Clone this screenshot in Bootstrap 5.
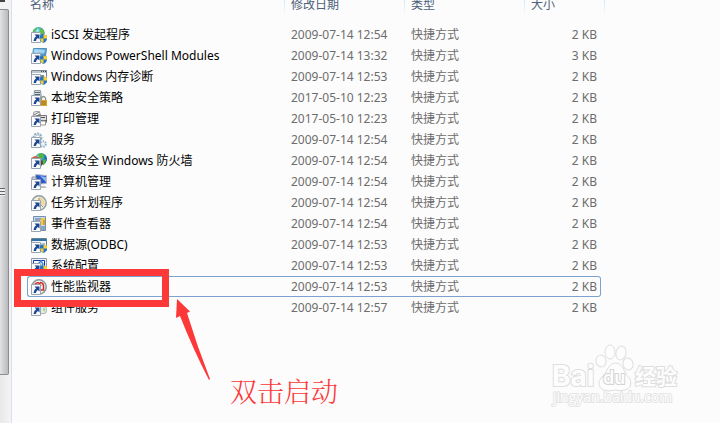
<!DOCTYPE html>
<html lang="zh-CN">
<head>
<meta charset="utf-8">
<meta name="viewport" content="width=device-width, initial-scale=1">
<title>管理工具</title>
<link href="https://cdn.jsdelivr.net/npm/bootstrap@5.3.0/dist/css/bootstrap.min.css" rel="stylesheet">
<style>
body{background:#fcfcfc;font:12px/20px "Noto Sans","Noto Sans CJK SC",sans-serif;color:#000}
.scroll-rail{width:12px;background:linear-gradient(90deg,#e9e9e9,#f1f1f1 8px,#f4f4f4);border-right:1px solid #d6e0f0}
.rail-cap{height:9px;width:9px;background:#f3f3f3}
.rail-cap::before{content:"";display:block;width:5px;height:2px;background:#444}
.rail-thumb{height:366px;width:9px;background:linear-gradient(90deg,#e2e2e4,#b9babd);border:1px solid #8c8c8c;border-left:0;border-radius:0 2px 2px 0}
.rail-grip{width:5px;height:8px;background:repeating-linear-gradient(#666 0 1px,#eee 1px 3px)}
.files{width:578px;margin-left:15px;table-layout:fixed;border-collapse:separate;border-spacing:0}
.files th{height:24px;padding:0 6px;font-weight:400;line-height:10px;color:#4c607a;vertical-align:top}
.files th:not(:nth-child(4)),.files .edge{background:linear-gradient(#d6e5f5,#fcfcfc) right top/1px 16px no-repeat}
.files th:first-child{padding-left:3px}
.files td{height:21px;padding:0 6px;color:#6d6d6d;line-height:19px;white-space:nowrap;border:solid transparent;border-width:1px 0}
.files tbody td:first-child{padding-left:3px;color:#000;border-left-width:1px}
.files tbody td:nth-child(4){padding-right:3px;border-right-width:1px;text-align:right}
.files tr.picked td{border-color:#7da2ce}
.files tr.picked td:first-child{border-radius:3px 0 0 3px}
.files tr.picked td:nth-child(4){border-radius:0 3px 3px 0}
.c-name{width:258px}.c-mid{width:120px}.c-size{width:76px}.c-end{width:4px}
.file-icon{width:16px;height:16px;flex:none}
.frame{left:14px;top:269px;width:155px;height:38px;border:solid #fd3838;border-width:7px}
.pointer{left:174px;top:296px}
.note{left:230px;top:374px;font:300 27px/34px "Noto Serif CJK SC","Noto Sans CJK SC",serif;color:#fd3838}
.brand{left:548px;top:340px}
</style>
<script src="https://cdn.jsdelivr.net/npm/bootstrap@5.3.0/dist/js/bootstrap.bundle.min.js"></script>
</head>
<body class="min-vh-100 d-flex position-relative overflow-hidden">
<svg class="position-absolute" width="0" height="0" aria-hidden="true">
<defs>
<linearGradient id="blue" x2="1" y2="1"><stop stop-color="#b8e4f8"/><stop offset="1" stop-color="#1769b5"/></linearGradient>
<radialGradient id="globe" cx=".4" cy=".3"><stop stop-color="#c8f4f4"/><stop offset=".5" stop-color="#46b8cc"/><stop offset="1" stop-color="#1a65a8"/></radialGradient>
</defs>
<symbol id="arrow" viewBox="0 0 16 16"><path d="M.5 5.500h9v10h-9z" fill="#fbfbfb" stroke="#9aa5b3"/><path d="M3.500 7.500h5v5L6.900 10.900Q5 12 5 14H2.500Q2.300 11 5.200 9.200z" fill="#1d4793"/></symbol>
<symbol id="shield" viewBox="0 0 16 16"><path d="M12.500 7.500l3.500 1v2.500q0 3.500-3.500 5-3.500-1.500-3.500-5V8.500z" fill="#2674c6"/><path d="M12.500 7.500l3.500 1v3h-3.500zM12.500 11.500V16q-2.800-1.300-3.400-4.500z" fill="#f9d12b"/></symbol>
<symbol id="i-iscsi" viewBox="0 0 16 16"><circle cx="7.500" cy="6" r="6" fill="url(#globe)"/><path d="M2.500 3q1-2 4-2.500L5 4 2 6zM9 1q4 1 4.500 5L11 8 9 5z" fill="#5ec24a"/><path d="M8 8h6v3H8z" fill="#a9b4bd"/><use href="#arrow"/><use href="#shield"/></symbol>
<symbol id="i-ps" viewBox="0 0 16 16"><path d="M2.500.500h13L14 12H1z" fill="url(#blue)" stroke="#4b91bd"/><path d="M4 2h10l-1 4Q8 3 4 6z" fill="#b8e4fa" opacity=".7"/><use href="#arrow"/><use href="#shield"/></symbol>
<symbol id="i-mem" viewBox="0 0 16 16"><path d="M.500 1.500h15v12H.500z" fill="#fff" stroke="#7e8994"/><path d="M1 2h14v2H1z" fill="#bcc6d0"/><path d="M10 2.500h1m1 0h1m1 0h1" stroke="#445"/><path d="M7 6h6v3H7z" fill="#888"/><use href="#arrow"/><use href="#shield"/></symbol>
<symbol id="i-sec" viewBox="0 0 16 16"><path d="M3.500.500h6l1 9h-8z" fill="#d6dce0" stroke="#8c979d"/><path d="M4 2.500h5M4 4.500h5" stroke="#52666d"/><path d="M10.500 10V8q2-3 4 0v2" fill="none" stroke="#8f8f80" stroke-width="1.300"/><path d="M9 10h7v6H9z" fill="#d6a52a"/><path d="M10 12h5m-5 2h5" stroke="#9f6e10"/><use href="#arrow"/></symbol>
<symbol id="i-print" viewBox="0 0 16 16"><path d="M2 5l1-4 5-1 2 5z" fill="#f3f3f3" stroke="#999"/><path d="M3 4l5-3m-2 4l3-2" stroke="#777"/><path d="M5.500 4.500h10v7h-10z" fill="#ddd" stroke="#777"/><path d="M7 6.500h7M10 9.500h6" stroke="#555"/><path d="M9.500 10h5v4h-5z" fill="#fff" stroke="#999"/><use href="#arrow"/></symbol>
<symbol id="i-gear" viewBox="0 0 16 16"><circle cx="6.500" cy="5.500" r="4" fill="#dce8ef" stroke="#95b2c4" stroke-width="2" stroke-dasharray="2 1"/><circle cx="6.500" cy="5.500" r="2.500" fill="#f9fbfc" stroke="#b2c7d4"/><circle cx="12" cy="12" r="2.800" fill="#edf4f8" stroke="#8fb3cb" stroke-width="2" stroke-dasharray="1.500 1"/><use href="#arrow"/></symbol>
<symbol id="i-fire" viewBox="0 0 16 16"><circle cx="10" cy="6" r="6" fill="url(#globe)"/><path d="M7 1q4-2 6 1l-2 4-3-1zM12 7l3-1-1 5-2 1z" fill="#53b538"/><path d="M0 5l4-2 6 2v6l-5 2-5-2z" fill="#c96143"/><path d="M9 6l3 3-2 5" fill="#733e33"/><use href="#arrow"/></symbol>
<symbol id="i-pc" viewBox="0 0 16 16"><path d="M4.500.500l11 1v8l-11 1z" fill="#2c58c8" stroke="#b6c0cf"/><path d="M9 2l6 1v5z" fill="#8eb5ed"/><path d="M1 3h4v9H1z" fill="#cbd0d7" stroke="#8e97a3"/><path d="M8 12h6l2 2H8z" fill="#bcc1c7"/><use href="#arrow"/></symbol>
<symbol id="i-task" viewBox="0 0 16 16"><circle cx="8" cy="8" r="7.200" fill="#f4f0df" stroke="#929ca6" stroke-width="1.500"/><path d="M8 8V2a6 6 0 0 1 5 9z" fill="#ecd79c"/><path d="M8 8l4 4M8 8V3" stroke="#8c918e"/><use href="#arrow"/></symbol>
<symbol id="i-event" viewBox="0 0 16 16"><path d="M2.500.500h12v14h-12z" fill="#c8daf0" stroke="#7590ad"/><path d="M4 3h6M4 5h5m1 6h4m-4 2h4" stroke="#516c91"/><path d="M10 2h4v7h-4z" fill="#f4c83f"/><path d="M13 4v5" stroke="#bd7b24"/><use href="#arrow"/></symbol>
<symbol id="i-odbc" viewBox="0 0 16 16"><path d="M.500 1.500h15v12H.500z" fill="#eef4f8" stroke="#638094"/><path d="M1 2h14v2H1z" fill="#3672a0"/><path d="M9 7h5M10 9h5" stroke="#8495a0"/><use href="#arrow"/><use href="#shield"/></symbol>
<symbol id="i-conf" viewBox="0 0 16 16"><path d="M.500.500h15v12H.500z" fill="#e8f2fa" stroke="#8f9bab"/><path d="M2.500 2.500h11v8h-11z" fill="#fff" stroke="#1734ae"/><path d="M7 6l3-3 2 3-2 3" fill="none" stroke="#3b8bd6" stroke-width="1.500"/><use href="#arrow"/><use href="#shield"/></symbol>
<symbol id="i-perf" viewBox="0 0 16 16"><circle cx="8" cy="8" r="7.200" fill="#f5f5f5" stroke="#89969a" stroke-width="1.500"/><path d="M4 5q2-2 4-1l2 3M9 3.500q3 0 3.500 3V11H10" fill="none" stroke="#cf2b27" stroke-width="1.500"/><use href="#arrow"/></symbol>
<symbol id="i-comp" viewBox="0 0 16 16"><circle cx="7" cy="4" r="4" fill="#d5dce1" stroke="#9aa4ac"/><circle cx="12" cy="10" r="3.800" fill="#e4ebe4" stroke="#aab4ac"/><path d="M12 8l2 1-1 3z" fill="#6ec36a"/><use href="#arrow"/></symbol>
</svg>

<aside class="scroll-rail flex-shrink-0" aria-hidden="true">
<div class="rail-cap"></div>
<div class="rail-thumb d-flex align-items-center"><div class="rail-grip"></div></div>
</aside>
<main class="flex-grow-1">
<table class="files">
<colgroup><col class="c-name"><col class="c-mid"><col class="c-mid"><col class="c-size"><col class="c-end"></colgroup>
<thead><tr><th scope="col">名称</th><th scope="col">修改日期</th><th scope="col">类型</th><th scope="col">大小</th><td class="p-0 border-0 edge"></td></tr></thead>
<tbody>
<tr><td><div class="d-flex align-items-center gap-1"><svg class="file-icon"><use href="#i-iscsi"/></svg>iSCSI 发起程序</div></td><td>2009-07-14 12:54</td><td>快捷方式</td><td>2 KB</td></tr>
<tr><td><div class="d-flex align-items-center gap-1"><svg class="file-icon"><use href="#i-ps"/></svg>Windows PowerShell Modules</div></td><td>2009-07-14 13:32</td><td>快捷方式</td><td>3 KB</td></tr>
<tr><td><div class="d-flex align-items-center gap-1"><svg class="file-icon"><use href="#i-mem"/></svg>Windows 内存诊断</div></td><td>2009-07-14 12:53</td><td>快捷方式</td><td>2 KB</td></tr>
<tr><td><div class="d-flex align-items-center gap-1"><svg class="file-icon"><use href="#i-sec"/></svg>本地安全策略</div></td><td>2017-05-10 12:23</td><td>快捷方式</td><td>2 KB</td></tr>
<tr><td><div class="d-flex align-items-center gap-1"><svg class="file-icon"><use href="#i-print"/></svg>打印管理</div></td><td>2017-05-10 12:23</td><td>快捷方式</td><td>2 KB</td></tr>
<tr><td><div class="d-flex align-items-center gap-1"><svg class="file-icon"><use href="#i-gear"/></svg>服务</div></td><td>2009-07-14 12:54</td><td>快捷方式</td><td>2 KB</td></tr>
<tr><td><div class="d-flex align-items-center gap-1"><svg class="file-icon"><use href="#i-fire"/></svg>高级安全 Windows 防火墙</div></td><td>2009-07-14 12:54</td><td>快捷方式</td><td>2 KB</td></tr>
<tr><td><div class="d-flex align-items-center gap-1"><svg class="file-icon"><use href="#i-pc"/></svg>计算机管理</div></td><td>2009-07-14 12:54</td><td>快捷方式</td><td>2 KB</td></tr>
<tr><td><div class="d-flex align-items-center gap-1"><svg class="file-icon"><use href="#i-task"/></svg>任务计划程序</div></td><td>2009-07-14 12:54</td><td>快捷方式</td><td>2 KB</td></tr>
<tr><td><div class="d-flex align-items-center gap-1"><svg class="file-icon"><use href="#i-event"/></svg>事件查看器</div></td><td>2009-07-14 12:54</td><td>快捷方式</td><td>2 KB</td></tr>
<tr><td><div class="d-flex align-items-center gap-1"><svg class="file-icon"><use href="#i-odbc"/></svg>数据源(ODBC)</div></td><td>2009-07-14 12:53</td><td>快捷方式</td><td>2 KB</td></tr>
<tr><td><div class="d-flex align-items-center gap-1"><svg class="file-icon"><use href="#i-conf"/></svg>系统配置</div></td><td>2009-07-14 12:53</td><td>快捷方式</td><td>2 KB</td></tr>
<tr class="picked"><td><div class="d-flex align-items-center gap-1"><svg class="file-icon"><use href="#i-perf"/></svg>性能监视器</div></td><td>2009-07-14 12:53</td><td>快捷方式</td><td>2 KB</td></tr>
<tr><td><div class="d-flex align-items-center gap-1"><svg class="file-icon"><use href="#i-comp"/></svg>组件服务</div></td><td>2009-07-14 12:57</td><td>快捷方式</td><td>2 KB</td></tr>
</tbody>
</table>
</main>

<div class="frame position-absolute"></div>
<svg class="pointer position-absolute" width="40" height="88" viewBox="0 0 40 88" aria-hidden="true"><path d="M3 3L16 15.500 13 17Q23 50 36 83l-1 1Q19 53 6 20L2 22z" fill="#fd3838"/></svg>
<div class="note position-absolute">双击启动</div>
<svg class="brand position-absolute" width="140" height="72" viewBox="0 0 140 72" role="img" aria-label="Baidu 经验 jingyan.baidu.com">
<g fill="#fdfdfd" stroke="#dedede">
<ellipse cx="53" cy="21" rx="5" ry="6" transform="rotate(-12 53 21)"/>
<ellipse cx="62" cy="12" rx="5" ry="7"/><ellipse cx="73" cy="13" rx="5" ry="7" transform="rotate(12 73 13)"/>
<ellipse cx="80" cy="24" rx="5" ry="6" transform="rotate(-15 80 24)"/>
<path d="M67 23Q73 23 76 30T82 39Q85 48 77 50 71 51 67 50 61 52 55 50 48 45 53 38 58 34 60 28 63 23 67 23z"/>
<g font-family="Inter,sans-serif" font-weight="700" paint-order="stroke" stroke-width="2">
<text x="4" y="46" font-size="28">Bai</text>
<text x="55" y="44" font-size="18" font-weight="600" stroke="#d4d4d4">du</text>
<text x="87" y="44" font-size="21" font-family="Noto Sans CJK SC,sans-serif">经验</text>
<text x="5" y="62" font-size="14" font-family="Open Sans,Noto Sans,sans-serif" font-weight="400" stroke="#e4e4e4">jingyan.baidu.com</text>
</g>
</g>
</svg>
</body>
</html>
